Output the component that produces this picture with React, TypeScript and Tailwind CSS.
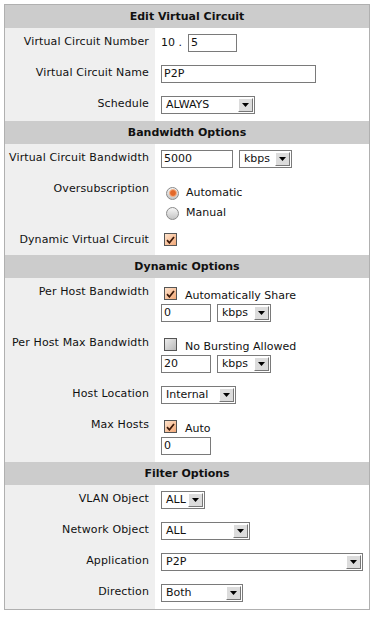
import React from "react";

// small form widgets drawn with divs so they look like the old browser controls

function Arrow() {
  return (
    <span className="m-px flex w-[15px] items-center justify-center border border-t-white border-l-white border-r-[#777] border-b-[#777] bg-[#dcdcdc]">
      <svg width="7" height="4" viewBox="0 0 7 4">
        <path d="M0 0h7L3.5 4z" fill="#000" />
      </svg>
    </span>
  );
}

function Select({ value, w }: { value: string; w: string }) {
  return (
    <div className={`flex h-[18px] ${w} items-stretch border border-[#7a7a7a] bg-white`}>
      <span className="flex-1 pl-[4px] leading-[16px]">{value}</span>
      <Arrow />
    </div>
  );
}

function TextBox({ value, w }: { value: string; w: string }) {
  return (
    <div className={`h-[18px] ${w} border border-[#7a7a7a] bg-white pl-[2px] leading-[16px]`}>
      {value}
    </div>
  );
}

function Check({ checked }: { checked: boolean }) {
  return (
    <span
      className={`flex h-[13px] w-[13px] shrink-0 items-center justify-center border border-[#555] ${
        checked
          ? "bg-linear-to-br from-[#fde3cc] to-[#f2a877]"
          : "bg-linear-to-br from-[#ececec] to-[#b9b9b9]"
      }`}
    >
      {checked && (
        <svg width="9" height="8" viewBox="0 0 9 8">
          <path d="M1 4.2l2.4 2.6L8 1" stroke="#3b1808" strokeWidth="1.7" fill="none" />
        </svg>
      )}
    </span>
  );
}

function Radio({ checked }: { checked: boolean }) {
  return (
    <span className="flex h-[13px] w-[13px] shrink-0 items-center justify-center rounded-full border border-[#8a8a8a] bg-linear-to-b from-[#f6f6f6] to-[#c4c4c4]">
      {checked && (
        <span className="h-[8px] w-[8px] rounded-full border border-[#f6b48a] bg-[#e2682a]" />
      )}
    </span>
  );
}

function Header({ title }: { title: string }) {
  return (
    <div className="col-span-2 flex h-[23px] items-center justify-center bg-[#cccccc] font-bold">
      {title}
    </div>
  );
}

function Row({
  label,
  children,
  cls = "pt-[6px] pb-[7px]",
}: {
  label: string;
  children: React.ReactNode;
  cls?: string;
}) {
  return (
    <>
      <div className="bg-[#efefef] pt-[7px] pr-[6px] text-right tracking-[0.12px]">{label}</div>
      <div className={`pl-[6px] ${cls}`}>{children}</div>
    </>
  );
}

function CheckLine({ checked, text }: { checked: boolean; text: string }) {
  return (
    <div className="flex h-[20px] items-start">
      <span className="mt-[3px] ml-[3px]">
        <Check checked={checked} />
      </span>
      <span className="ml-[8px] pt-[5px]">{text}</span>
    </div>
  );
}

function RadioLine({ checked, text }: { checked: boolean; text: string }) {
  return (
    <div className="flex h-[20px] items-center">
      <span className="ml-[5px]">
        <Radio checked={checked} />
      </span>
      <span className="ml-[7px]">{text}</span>
    </div>
  );
}

export default function App() {
  return (
    <div className="bg-white p-[4px] font-['DejaVu_Sans',Verdana,sans-serif] text-[11px] leading-[14px] text-[#111]">
      <div className="grid w-[366px] grid-cols-[150px_1fr] border border-[#b0b0b0]">
        <Header title="Edit Virtual Circuit" />
        <Row label="Virtual Circuit Number">
          <div className="flex items-center">
            <span className="w-[27px]">10 .</span>
            <TextBox value="5" w="w-[49px]" />
          </div>
        </Row>
        <Row label="Virtual Circuit Name">
          <TextBox value="P2P" w="w-[155px]" />
        </Row>
        <Row label="Schedule">
          <Select value="ALWAYS" w="w-[94px]" />
        </Row>

        <Header title="Bandwidth Options" />
        <Row label="Virtual Circuit Bandwidth">
          <div className="flex gap-[6px]">
            <TextBox value="5000" w="w-[72px]" />
            <Select value="kbps" w="w-[53px]" />
          </div>
        </Row>
        <Row label="Oversubscription" cls="pt-[8px] pb-[3px]">
          <RadioLine checked text="Automatic" />
          <RadioLine checked={false} text="Manual" />
        </Row>
        <Row label="Dynamic Virtual Circuit" cls="h-[29px] pt-[7px]">
          <span className="ml-[3px] inline-flex">
            <Check checked />
          </span>
        </Row>

        <Header title="Dynamic Options" />
        <Row label="Per Host Bandwidth">
          <CheckLine checked text="Automatically Share" />
          <div className="flex gap-[6px]">
            <TextBox value="0" w="w-[50px]" />
            <Select value="kbps" w="w-[54px]" />
          </div>
        </Row>
        <Row label="Per Host Max Bandwidth">
          <CheckLine checked={false} text="No Bursting Allowed" />
          <div className="flex gap-[6px]">
            <TextBox value="20" w="w-[50px]" />
            <Select value="kbps" w="w-[54px]" />
          </div>
        </Row>
        <Row label="Host Location">
          <Select value="Internal" w="w-[75px]" />
        </Row>
        <Row label="Max Hosts">
          <CheckLine checked text="Auto" />
          <TextBox value="0" w="w-[50px]" />
        </Row>

        <Header title="Filter Options" />
        <Row label="VLAN Object">
          <Select value="ALL" w="w-[44px]" />
        </Row>
        <Row label="Network Object">
          <Select value="ALL" w="w-[89px]" />
        </Row>
        <Row label="Application">
          <Select value="P2P" w="w-[202px]" />
        </Row>
        <Row label="Direction">
          <Select value="Both" w="w-[82px]" />
        </Row>
      </div>
    </div>
  );
}
